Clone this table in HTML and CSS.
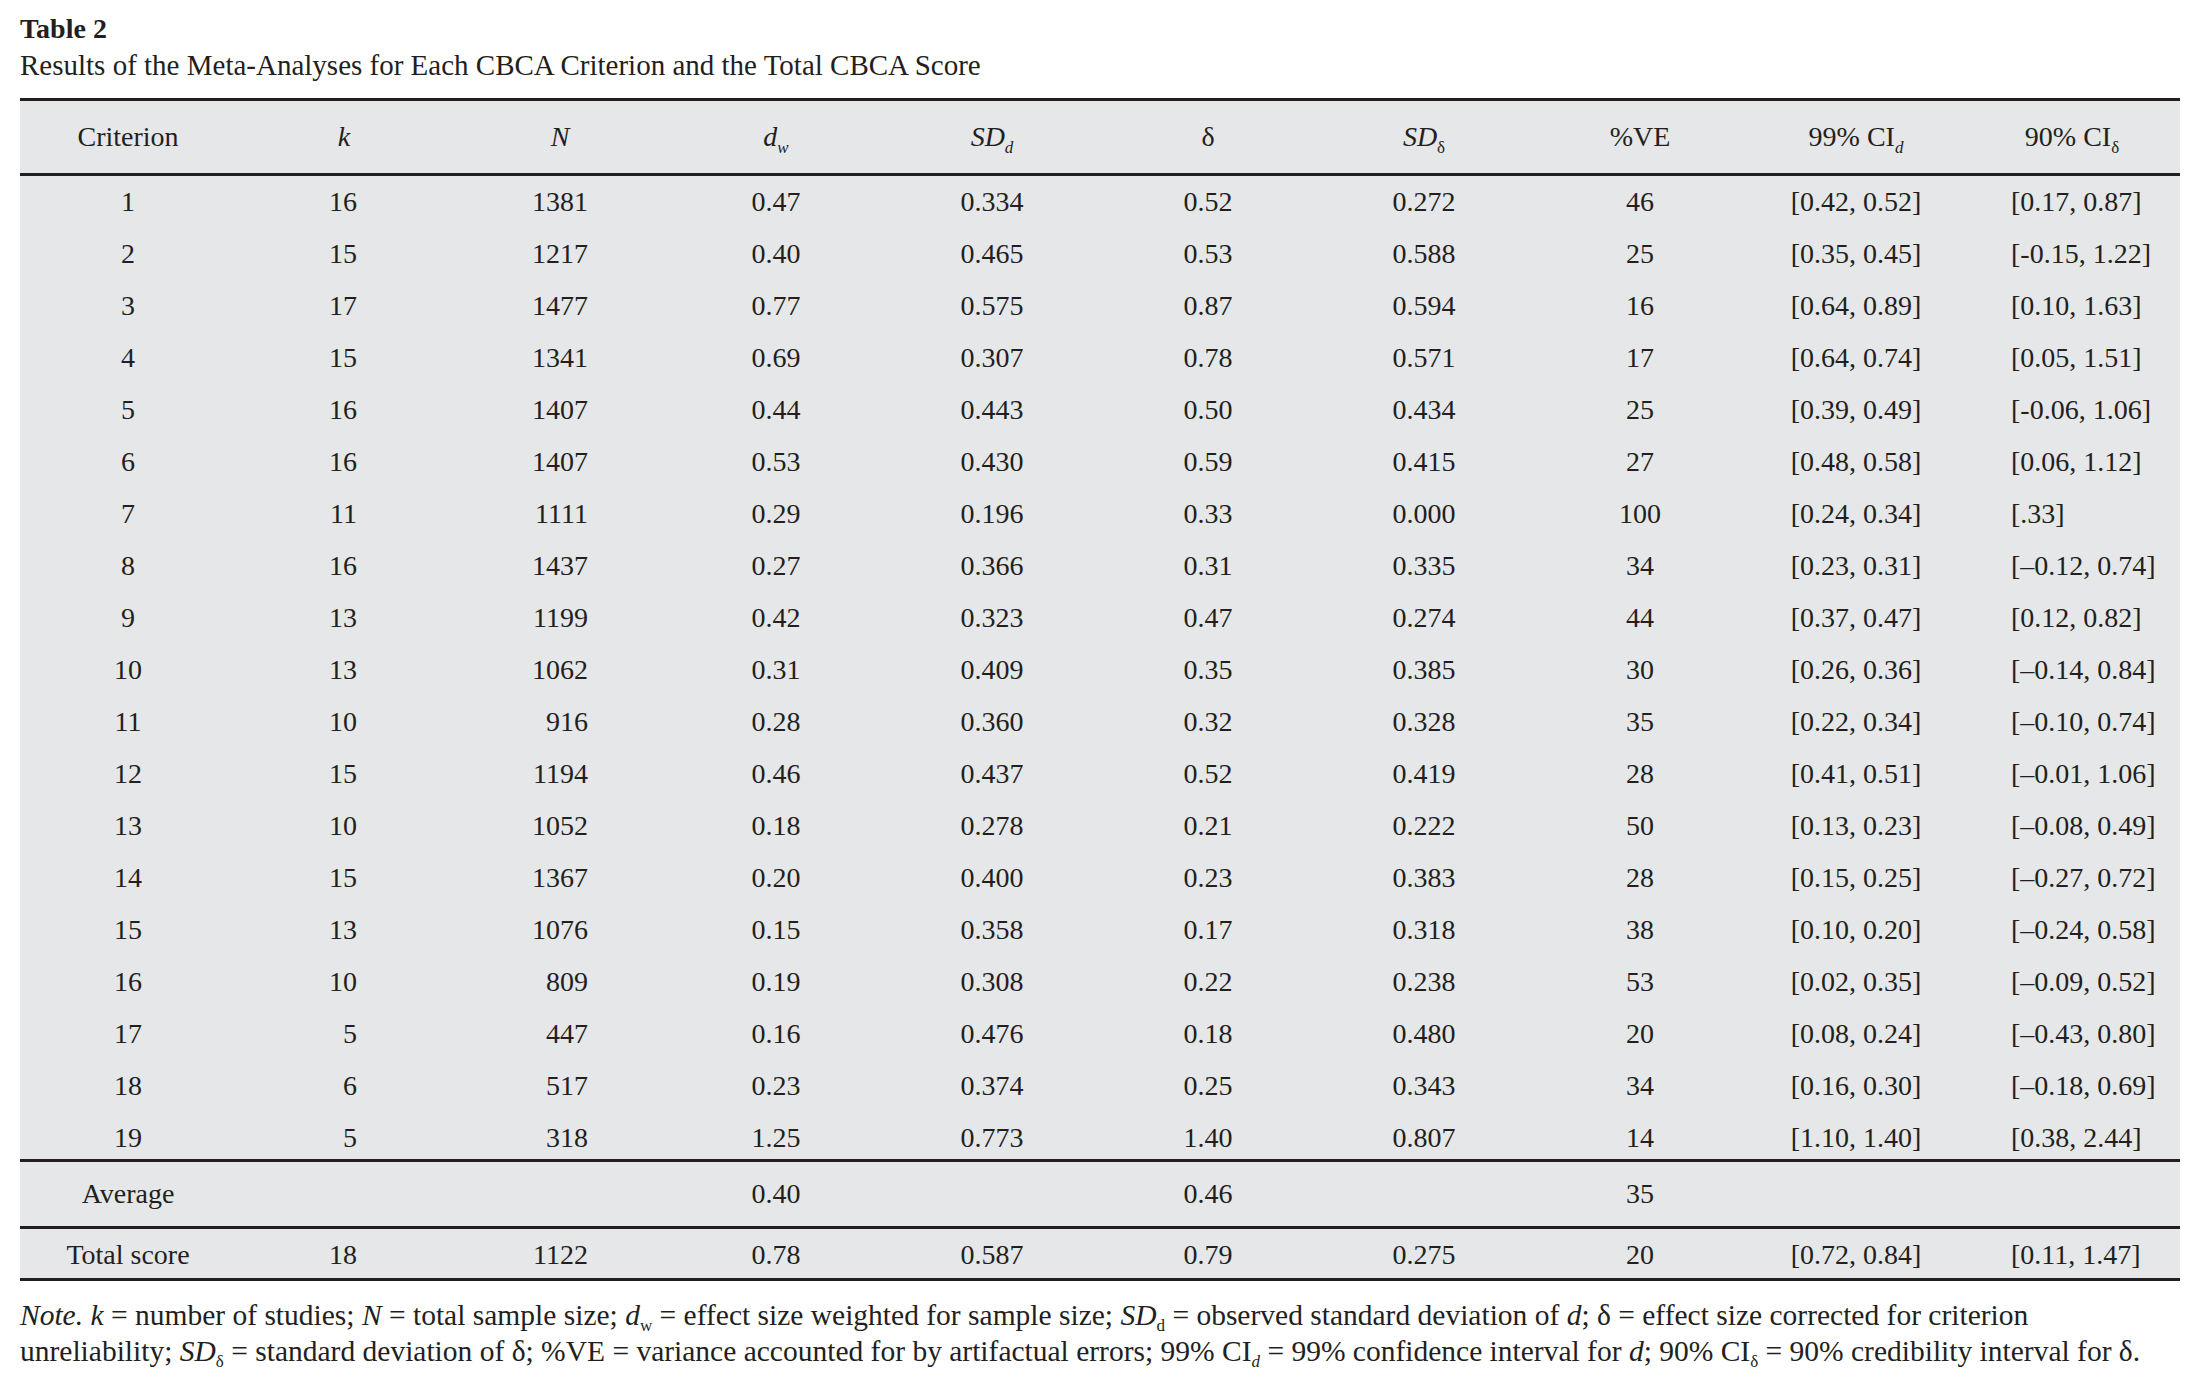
FILE: index.html
```html
<!DOCTYPE html>
<html lang="en">
<head>
<meta charset="utf-8">
<title>Table 2</title>
<link rel="stylesheet" href="styles.css">
</head>
<body>
<div class="page">
  <h1 class="title">Table 2</h1>
  <p class="caption">Results of the Meta-Analyses for Each CBCA Criterion and the Total CBCA Score</p>
  <table class="meta">
    <thead>
      <tr>
        <th>Criterion</th>
        <th><i>k</i></th>
        <th><i>N</i></th>
        <th><i>d</i><sub><i>w</i></sub></th>
        <th><i>SD</i><sub><i>d</i></sub></th>
        <th>δ</th>
        <th><i>SD</i><sub>δ</sub></th>
        <th>%VE</th>
        <th>99% CI<sub><i>d</i></sub></th>
        <th>90% CI<sub>δ</sub></th>
      </tr>
    </thead>
    <tbody class="crit">
      <tr><td>1</td><td class="k">16</td><td class="n">1381</td><td>0.47</td><td>0.334</td><td>0.52</td><td>0.272</td><td>46</td><td>[0.42, 0.52]</td><td class="cr">[0.17, 0.87]</td></tr>
      <tr><td>2</td><td class="k">15</td><td class="n">1217</td><td>0.40</td><td>0.465</td><td>0.53</td><td>0.588</td><td>25</td><td>[0.35, 0.45]</td><td class="cr">[-0.15, 1.22]</td></tr>
      <tr><td>3</td><td class="k">17</td><td class="n">1477</td><td>0.77</td><td>0.575</td><td>0.87</td><td>0.594</td><td>16</td><td>[0.64, 0.89]</td><td class="cr">[0.10, 1.63]</td></tr>
      <tr><td>4</td><td class="k">15</td><td class="n">1341</td><td>0.69</td><td>0.307</td><td>0.78</td><td>0.571</td><td>17</td><td>[0.64, 0.74]</td><td class="cr">[0.05, 1.51]</td></tr>
      <tr><td>5</td><td class="k">16</td><td class="n">1407</td><td>0.44</td><td>0.443</td><td>0.50</td><td>0.434</td><td>25</td><td>[0.39, 0.49]</td><td class="cr">[-0.06, 1.06]</td></tr>
      <tr><td>6</td><td class="k">16</td><td class="n">1407</td><td>0.53</td><td>0.430</td><td>0.59</td><td>0.415</td><td>27</td><td>[0.48, 0.58]</td><td class="cr">[0.06, 1.12]</td></tr>
      <tr><td>7</td><td class="k">11</td><td class="n">1111</td><td>0.29</td><td>0.196</td><td>0.33</td><td>0.000</td><td>100</td><td>[0.24, 0.34]</td><td class="cr">[.33]</td></tr>
      <tr><td>8</td><td class="k">16</td><td class="n">1437</td><td>0.27</td><td>0.366</td><td>0.31</td><td>0.335</td><td>34</td><td>[0.23, 0.31]</td><td class="cr">[–0.12, 0.74]</td></tr>
      <tr><td>9</td><td class="k">13</td><td class="n">1199</td><td>0.42</td><td>0.323</td><td>0.47</td><td>0.274</td><td>44</td><td>[0.37, 0.47]</td><td class="cr">[0.12, 0.82]</td></tr>
      <tr><td>10</td><td class="k">13</td><td class="n">1062</td><td>0.31</td><td>0.409</td><td>0.35</td><td>0.385</td><td>30</td><td>[0.26, 0.36]</td><td class="cr">[–0.14, 0.84]</td></tr>
      <tr><td>11</td><td class="k">10</td><td class="n">916</td><td>0.28</td><td>0.360</td><td>0.32</td><td>0.328</td><td>35</td><td>[0.22, 0.34]</td><td class="cr">[–0.10, 0.74]</td></tr>
      <tr><td>12</td><td class="k">15</td><td class="n">1194</td><td>0.46</td><td>0.437</td><td>0.52</td><td>0.419</td><td>28</td><td>[0.41, 0.51]</td><td class="cr">[–0.01, 1.06]</td></tr>
      <tr><td>13</td><td class="k">10</td><td class="n">1052</td><td>0.18</td><td>0.278</td><td>0.21</td><td>0.222</td><td>50</td><td>[0.13, 0.23]</td><td class="cr">[–0.08, 0.49]</td></tr>
      <tr><td>14</td><td class="k">15</td><td class="n">1367</td><td>0.20</td><td>0.400</td><td>0.23</td><td>0.383</td><td>28</td><td>[0.15, 0.25]</td><td class="cr">[–0.27, 0.72]</td></tr>
      <tr><td>15</td><td class="k">13</td><td class="n">1076</td><td>0.15</td><td>0.358</td><td>0.17</td><td>0.318</td><td>38</td><td>[0.10, 0.20]</td><td class="cr">[–0.24, 0.58]</td></tr>
      <tr><td>16</td><td class="k">10</td><td class="n">809</td><td>0.19</td><td>0.308</td><td>0.22</td><td>0.238</td><td>53</td><td>[0.02, 0.35]</td><td class="cr">[–0.09, 0.52]</td></tr>
      <tr><td>17</td><td class="k">5</td><td class="n">447</td><td>0.16</td><td>0.476</td><td>0.18</td><td>0.480</td><td>20</td><td>[0.08, 0.24]</td><td class="cr">[–0.43, 0.80]</td></tr>
      <tr><td>18</td><td class="k">6</td><td class="n">517</td><td>0.23</td><td>0.374</td><td>0.25</td><td>0.343</td><td>34</td><td>[0.16, 0.30]</td><td class="cr">[–0.18, 0.69]</td></tr>
      <tr class="last"><td>19</td><td class="k">5</td><td class="n">318</td><td>1.25</td><td>0.773</td><td>1.40</td><td>0.807</td><td>14</td><td>[1.10, 1.40]</td><td class="cr">[0.38, 2.44]</td></tr>
    </tbody>
    <tbody class="avg">
      <tr><td>Average</td><td class="k"></td><td class="n"></td><td>0.40</td><td></td><td>0.46</td><td></td><td>35</td><td></td><td class="cr"></td></tr>
    </tbody>
    <tbody class="total">
      <tr><td>Total score</td><td class="k">18</td><td class="n">1122</td><td>0.78</td><td>0.587</td><td>0.79</td><td>0.275</td><td>20</td><td>[0.72, 0.84]</td><td class="cr">[0.11, 1.47]</td></tr>
    </tbody>
  </table>
  <p class="note"><i>Note.</i> <i>k</i> = number of studies; <i>N</i> = total sample size; <i>d</i><sub>w</sub> = effect size weighted for sample size; <i>SD</i><sub>d</sub> = observed standard deviation of <i>d</i>; δ = effect size corrected for criterion unreliability; <i>SD</i><sub>δ</sub> = standard deviation of δ; %VE = variance accounted for by artifactual errors; 99% CI<sub><i>d</i></sub> = 99% confidence interval for <i>d</i>; 90% CI<sub>δ</sub> = 90% credibility interval for δ.</p>
</div>
</body>
</html>
```

FILE: styles.css
```css
html, body {
  margin: 0;
  padding: 0;
  background: #ffffff;
}

body {
  font-family: "Liberation Serif", "Times New Roman", serif;
  color: #231f20;
}

.page {
  padding: 11px 20px 0 20px;
  width: 2160px;
}

.title {
  margin: 0;
  font-size: 28px;
  font-weight: bold;
  line-height: 36px;
}

.caption {
  margin: 0;
  font-size: 29px;
  line-height: 36px;
}

.meta {
  margin-top: 15px;
  width: 2160px;
  table-layout: fixed;
  border-collapse: collapse;
  background: #e6e7e8;
  font-size: 28px;
}

.meta thead tr {
  border-top: 3px solid #231f20;
  border-bottom: 3px solid #231f20;
}

.meta th {
  font-weight: normal;
  text-align: center;
  padding: 16px 0;
  line-height: 40px;
  vertical-align: top;
}

.meta td {
  text-align: center;
  padding: 6px 0;
  line-height: 40px;
  vertical-align: top;
  white-space: nowrap;
}

.meta sub {
  font-size: 17px;
  line-height: 0;
  vertical-align: -7px;
}

.meta td.k {
  text-align: right;
  padding-right: 95px;
}

.meta td.n {
  text-align: right;
  padding-right: 80px;
}

.meta td.cr {
  text-align: left;
  padding-left: 47px;
}

.meta .crit tr.last td {
  padding-bottom: 1px;
}

.meta .avg tr {
  border-top: 3px solid #231f20;
  border-bottom: 3px solid #231f20;
}

.meta .avg td {
  padding-top: 12px;
  padding-bottom: 12px;
}

.meta .total tr {
  border-bottom: 3px solid #231f20;
}

.meta .total td {
  padding-top: 6px;
  padding-bottom: 3px;
}

.note {
  margin: 16px 0 0 0;
  font-size: 29.5px;
  line-height: 36px;
}

.note sub {
  font-size: 17px;
  line-height: 0;
  vertical-align: -6px;
}
```
